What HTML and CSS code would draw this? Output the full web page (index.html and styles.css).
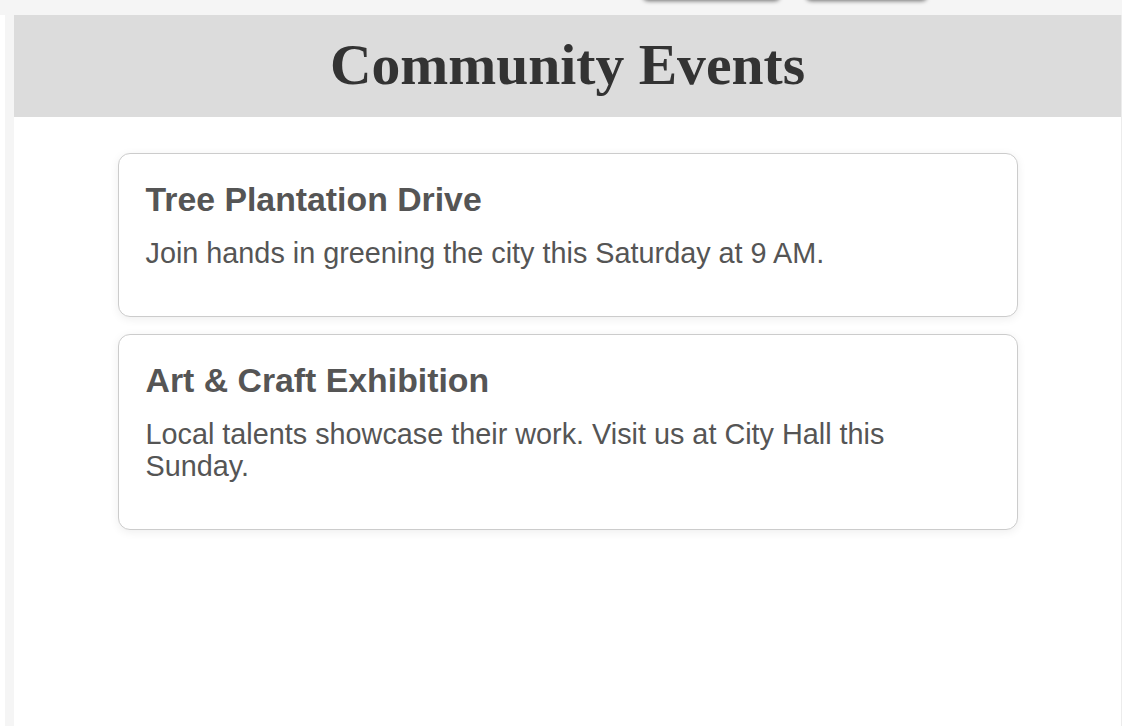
FILE: index.html
```html
<!DOCTYPE html>
<html lang="en">
<head>
<meta charset="utf-8">
<title>Community Events</title>
<link rel="stylesheet" href="styles.css">
</head>
<body>
<div class="topbar">
  <button class="float-btn btn-a" type="button" aria-label="Previous"></button>
  <button class="float-btn btn-b" type="button" aria-label="Next"></button>
</div>
<div class="frame">
  <div class="gutter"></div>
  <div class="rail"></div>
  <main class="page">
    <header class="site-header">
      <h1 class="site-title">Community Events</h1>
    </header>
    <section class="events">
      <article class="event">
        <h2 class="event-title">Tree Plantation Drive</h2>
        <p class="event-text">Join hands in greening the city this Saturday at 9 AM.</p>
      </article>
      <article class="event">
        <h2 class="event-title">Art &amp; Craft Exhibition</h2>
        <p class="event-text">Local talents showcase their work. Visit us at City Hall this Sunday.</p>
      </article>
    </section>
  </main>
</div>
</body>
</html>
```

FILE: styles.css
```css
html, body {
  margin: 0;
  padding: 0;
  height: 100%;
  background: #ffffff;
  overflow: hidden;
}

.topbar {
  position: relative;
  height: 15px;
  background: #f5f5f5;
}

.float-btn {
  position: absolute;
  top: -42px;
  height: 42px;
  padding: 0;
  border: none;
  border-radius: 5px;
  background: #9a9a9a;
  box-shadow: 0 1px 4px rgba(0, 0, 0, 0.55);
}

.btn-a { left: 643px; width: 137px; }
.btn-b { left: 806px; width: 121px; }

.frame {
  display: flex;
  height: calc(100% - 15px);
}

.gutter {
  width: 5px;
  background: #ffffff;
}

.rail {
  width: 9px;
  background: #f5f5f5;
}

.page {
  flex: 1;
  border-right: 1px solid #ececec;
  background: #ffffff;
}

.site-header {
  background: #dcdcdc;
  height: 102px;
  box-sizing: border-box;
  padding-top: 17px;
  text-align: center;
}

.site-title {
  margin: 0;
  font-family: "Liberation Serif", "Times New Roman", serif;
  font-weight: bold;
  font-size: 57.6px;
  line-height: 1.15;
  color: #333333;
}

.events {
  display: flex;
  flex-direction: column;
  gap: 17px;
  max-width: 900px;
  margin: 36px auto 0;
  font-family: "Liberation Sans", Arial, sans-serif;
  color: #555555;
}

.event {
  border: 1px solid #cccccc;
  border-radius: 12px;
  background: #ffffff;
  box-shadow: 0 2px 10px rgba(0, 0, 0, 0.07);
  padding: 26px 27px 47px;
}

.event-title {
  margin: 0 0 18px;
  font-size: 33.8px;
  line-height: 39px;
  font-weight: bold;
}

.event-text {
  margin: 0;
  font-size: 28.8px;
  line-height: 32px;
}
```
